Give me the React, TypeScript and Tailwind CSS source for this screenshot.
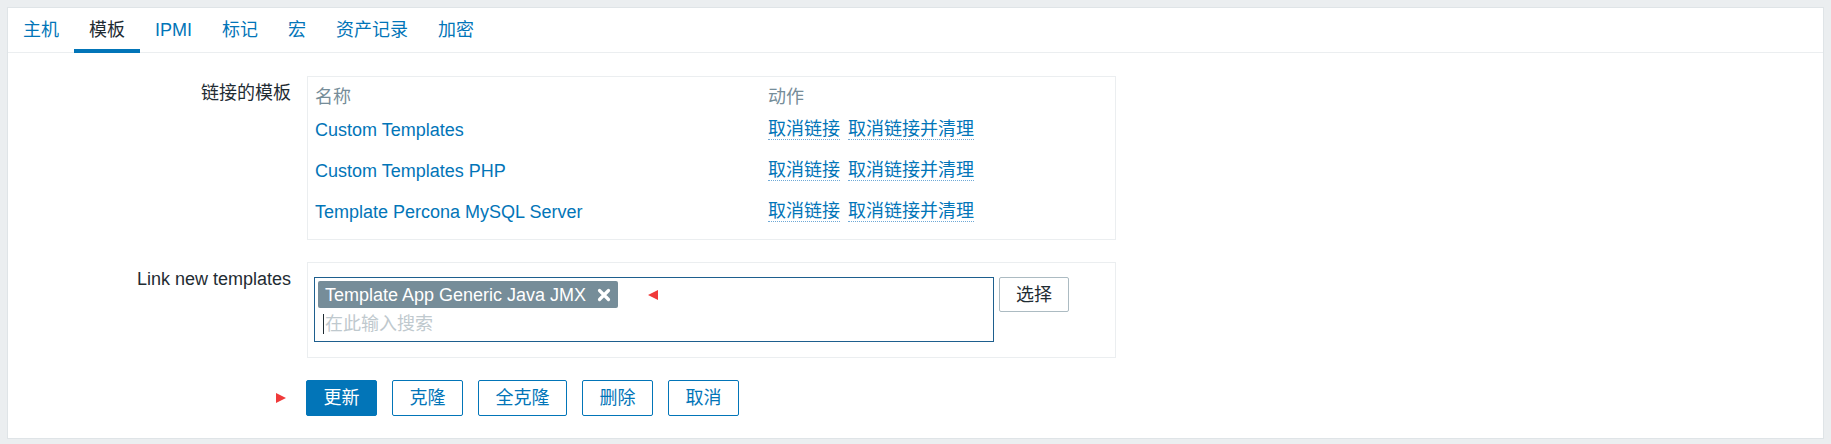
import React from 'react';

const tabs = ['主机', '模板', 'IPMI', '标记', '宏', '资产记录', '加密'];

const linked = ['Custom Templates', 'Custom Templates PHP', 'Template Percona MySQL Server'];

function Marker({ dir }: { dir: 'left' | 'right' }) {
  return (
    <svg width="10" height="10" viewBox="0 0 10 10" className="block">
      {dir === 'left' ? (
        <polygon points="10,0 10,10 0,5" fill="#f03a3a" />
      ) : (
        <polygon points="0,0 10,5 0,10" fill="#f03a3a" />
      )}
    </svg>
  );
}

function ActionLink({ children }: { children: React.ReactNode }) {
  return (
    <span className="inline-block leading-[20px] text-[#0275b8] border-b border-dotted border-[#6fa9d6] cursor-pointer">
      {children}
    </span>
  );
}

export default function App() {
  return (
    <div className="h-[444px] bg-[#ebeef0] pt-[7px] px-[7px] pb-[5px] font-['Liberation_Sans','Noto_Sans_CJK_SC',sans-serif] text-[18px] text-[#1f2c33]">
      <div className="h-full bg-white border border-[#dfe4e7] flex flex-col">
        {/* tabs */}
        <div className="h-[45px] flex border-b border-[#ebeef0]">
          {tabs.map((t) => (
            <div
              key={t}
              className={
                t === '模板'
                  ? 'h-[45px] -mb-px px-[15px] flex items-center border-b-[4px] border-[#0275b8] text-[#1f2c33] pt-[4px]'
                  : 'h-[45px] -mb-px px-[15px] flex items-center text-[#0275b8]'
              }
            >
              {t}
            </div>
          ))}
        </div>

        <div className="pt-[23px] flex flex-col">
          {/* linked templates */}
          <div className="flex items-start">
            <div className="w-[283px] text-right pt-[7px] leading-[20px]">链接的模板</div>
            <div className="ml-[16px] w-[809px] border border-[#ebeef0] pt-[8px] pb-[7px] px-[7px]">
              <div className="grid grid-cols-[453px_1fr] h-[24px] items-center text-[#768d99] leading-[20px]">
                <div>名称</div>
                <div>动作</div>
              </div>
              {linked.map((name) => (
                <div key={name} className="grid grid-cols-[453px_1fr] h-[41px] items-center leading-[20px]">
                  <div className="text-[#0275b8]">{name}</div>
                  <div className="flex gap-[8px]">
                    <ActionLink>取消链接</ActionLink>
                    <ActionLink>取消链接并清理</ActionLink>
                  </div>
                </div>
              ))}
            </div>
          </div>

          {/* link new templates */}
          <div className="flex items-start mt-[22px]">
            <div className="w-[283px] text-right pt-[7px] leading-[20px]">Link new templates</div>
            <div className="ml-[16px] w-[809px] border border-[#ebeef0] pl-[6px] pt-[14px] pb-[15px] flex items-start">
              <div className="w-[680px] h-[65px] border border-[#1e5f8e] p-[3px] flex flex-col">
                <div className="flex items-center h-[27px]">
                  <div className="h-[27px] bg-[#768d99] rounded-[2px] text-white flex items-center pl-[7px] pr-[7px] leading-[20px]">
                    <span>Template App Generic Java JMX</span>
                    <svg width="14" height="14" viewBox="0 0 14 14" className="ml-[11px] block">
                      <path d="M2.5 2.5 L11.5 11.5 M11.5 2.5 L2.5 11.5" stroke="#ffffff" strokeWidth="3.2" strokeLinecap="round" />
                    </svg>
                  </div>
                  <div className="ml-[30px]">
                    <Marker dir="left" />
                  </div>
                </div>
                <div className="h-[29px] mt-[1px] flex items-center pl-[5px]">
                  <span className="w-px h-[20px] bg-[#1f2c33]" />
                  <span className="ml-[1px] text-[#bfc9ce] leading-[20px]">在此输入搜索</span>
                </div>
              </div>
              <button className="ml-[5px] w-[70px] h-[35px] border border-[#acbbc2] rounded-[2px] bg-white text-[#1f2c33] leading-[20px]">
                选择
              </button>
            </div>
          </div>

          {/* buttons */}
          <div className="flex items-center mt-[22px]">
            <div className="w-[298px] flex justify-end pr-[20px]">
              <Marker dir="right" />
            </div>
            <div className="flex gap-[15px]">
              <button className="w-[71px] h-[36px] rounded-[2px] bg-[#0275b8] border border-[#0275b8] text-white leading-[20px]">更新</button>
              <button className="w-[71px] h-[36px] rounded-[2px] bg-white border border-[#0275b8] text-[#0275b8] leading-[20px]">克隆</button>
              <button className="w-[89px] h-[36px] rounded-[2px] bg-white border border-[#0275b8] text-[#0275b8] leading-[20px]">全克隆</button>
              <button className="w-[71px] h-[36px] rounded-[2px] bg-white border border-[#0275b8] text-[#0275b8] leading-[20px]">删除</button>
              <button className="w-[71px] h-[36px] rounded-[2px] bg-white border border-[#0275b8] text-[#0275b8] leading-[20px]">取消</button>
            </div>
          </div>
        </div>
      </div>
    </div>
  );
}
